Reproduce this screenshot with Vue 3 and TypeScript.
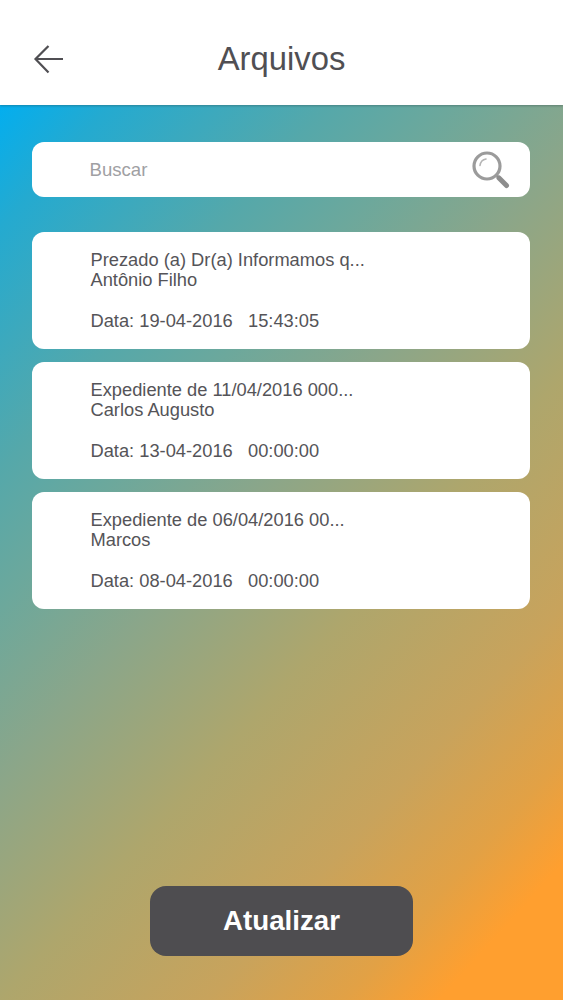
<script setup lang="ts">
const items = [
  { title: 'Prezado (a) Dr(a) Informamos q...', name: 'Antônio Filho', date: '19-04-2016', time: '15:43:05' },
  { title: 'Expediente de 11/04/2016 000...', name: 'Carlos Augusto', date: '13-04-2016', time: '00:00:00' },
  { title: 'Expediente de 06/04/2016 00...', name: 'Marcos', date: '08-04-2016', time: '00:00:00' },
]
</script>

<template>
  <div class="page">
    <header class="top">
      <svg class="back" width="32" height="30" viewBox="0 0 32 30" fill="none" stroke="#504f53" stroke-width="2.200">
        <path d="M30 14H2.500M15.500 1 2.500 14 15.500 27.500" />
      </svg>
      <h1>Arquivos</h1>
    </header>
    <main class="content">
      <div class="search">
        <span>Buscar</span>
        <svg width="40" height="40" viewBox="0 0 40 40" fill="none">
          <circle cx="16" cy="16" r="13" stroke="#9b9b9b" stroke-width="3.200" />
          <path d="M9 15.500C9.500 12 12 9.500 15 9" stroke="#b5b5b5" stroke-width="1.600" stroke-linecap="round" />
          <path d="M25.500 25.500 27.500 27.500" stroke="#9b9b9b" stroke-width="2.500" />
          <path d="M28 28 35.500 35.500" stroke="#8d8d8d" stroke-width="5" stroke-linecap="round" />
        </svg>
      </div>
      <ul class="list">
        <li v-for="item in items" :key="item.title">
          <p>{{ item.title }}</p>
          <p>{{ item.name }}</p>
          <p class="date">Data: {{ item.date }}&nbsp;&nbsp; {{ item.time }}</p>
        </li>
      </ul>
      <button type="button">Atualizar</button>
    </main>
  </div>
</template>

<style>
html, body { margin: 0; padding: 0; }
</style>

<style scoped>
.page {
  width: 563px;
  height: 1000px;
  display: flex;
  flex-direction: column;
  font-family: "Liberation Sans", Arial, sans-serif;
  color: #555458;
  overflow: hidden;
}
.top {
  height: 105px;
  flex: none;
  background: #fff;
  box-sizing: border-box;
  position: relative;
  display: flex;
  align-items: center;
  justify-content: center;
  padding-top: 13px;
  box-shadow: 0 1px 2px rgba(40, 60, 60, 0.35);
  z-index: 1;
}
.back { position: absolute; left: 33px; top: 45px; }
h1 { margin: 0; font-size: 32.800px; font-weight: 400; line-height: 1; color: #504f53; }
.content {
  flex: 1;
  display: flex;
  flex-direction: column;
  padding: 37px 33.500px 44px 31.500px;
  background: linear-gradient(132deg, #03aeef 0%, #24aad0 8%, #55a8aa 24%, #6ca89c 33%, #8aa68a 44%, #aea66c 59%, #c8a35c 74%, #e2a145 84%, #ff9f2f 91%);
}
.search {
  height: 55px;
  background: #fff;
  border-radius: 12px;
  display: flex;
  align-items: center;
  justify-content: space-between;
  padding: 0 19px 0 58px;
  font-size: 18.600px;
  color: #a0a0a3;
}
.list {
  list-style: none;
  margin: 34.500px 0 0;
  padding: 0;
  display: flex;
  flex-direction: column;
  gap: 13px;
}
li {
  height: 117px;
  box-sizing: border-box;
  background: #fff;
  border-radius: 12px;
  padding: 18px 0 0 59px;
  font-size: 18.300px;
  line-height: 20px;
}
p { margin: 0; }
.date { margin-top: 21px; }
button {
  margin: auto 0 0 118.500px;
  width: 263px;
  height: 70px;
  border: 0;
  border-radius: 16px;
  background: #4e4d50;
  color: #fff;
  font: 700 27.700px "Liberation Sans", Arial, sans-serif;
}
</style>
